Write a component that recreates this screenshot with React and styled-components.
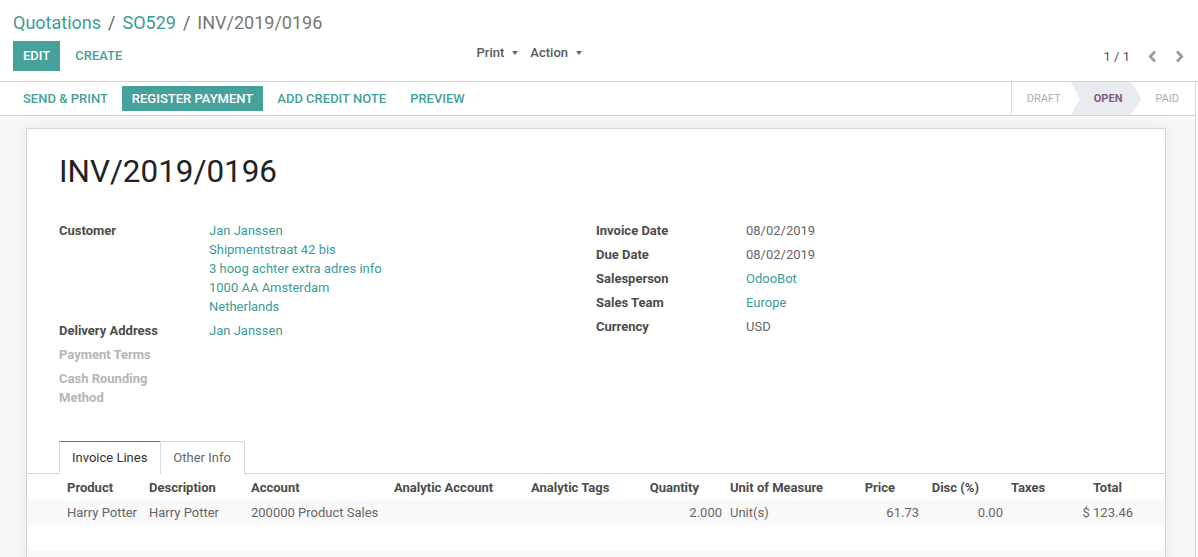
import React from 'react';
import styled, { createGlobalStyle } from 'styled-components';

const TEAL = '#46a19b';
const LINK = '#3a9d97';
const PURPLE = '#875a7b';

const GlobalStyle = createGlobalStyle`
  html, body { margin: 0; padding: 0; height: 100%; overflow: hidden; }
  body { font-family: Roboto, "Noto Sans", sans-serif; font-size: 13px; color: #4c4c4c; background: #fff; }
  * { box-sizing: border-box; }
`;

const Page = styled.div`
  width: 1198px;
  height: 557px;
  display: flex;
  flex-direction: column;
  overflow: hidden;
  background: #fff;
`;

/* ---------- control panel ---------- */
const ControlPanel = styled.div`
  flex: none;
  height: 82px;
  border-bottom: 1px solid #d2d2d2;
  padding: 11px 9px 0 13px;
  display: flex;
  flex-direction: column;
  gap: 6px;
`;

const Breadcrumb = styled.ol`
  list-style: none;
  margin: 0;
  padding: 0;
  display: flex;
  font-size: 18px;
  line-height: 24px;
`;

const Crumb = styled.li`
  color: ${p => (p.$active ? '#777' : LINK)};
  display: flex;
`;

const CrumbSep = styled.span`
  color: #666;
  padding: 0 7px;
`;

const CPRow = styled.div`
  display: grid;
  grid-template-columns: 1fr 1fr;
  height: 30px;
`;

const CPLeft = styled.div`
  display: flex;
  justify-content: space-between;
  align-items: flex-start;
  padding-right: 19px;
`;

const CPRight = styled.div`
  display: flex;
  justify-content: flex-end;
  align-items: flex-start;
`;

const ButtonGroup = styled.div`
  display: flex;
  gap: 5px;
  align-items: center;
`;

const Btn = styled.button`
  font-family: inherit;
  font-size: 13px;
  font-weight: 500;
  text-transform: uppercase;
  border: none;
  border-radius: 0;
  cursor: pointer;
  padding: 0 10px;
  height: ${p => p.$h || 30}px;
  line-height: ${p => p.$h || 30}px;
  background: ${p => (p.$primary ? TEAL : 'transparent')};
  color: ${p => (p.$primary ? '#fff' : TEAL)};
  white-space: nowrap;
`;

const Sidebar = styled.div`
  display: flex;
  gap: 12px;
  margin-top: 2px;
  line-height: 19px;
`;

const Dropdown = styled.span`
  display: flex;
  align-items: center;
  color: #5a5a5a;
  font-size: 13px;
  font-weight: 500;
`;

const Caret = styled.span`
  display: inline-block;
  width: 0;
  height: 0;
  margin-left: 8px;
  border-top: 4px solid #666;
  border-left: 3.5px solid transparent;
  border-right: 3.5px solid transparent;
`;

const Pager = styled.div`
  display: flex;
  align-items: center;
  margin-top: 6px;
  height: 19px;
`;

const PagerValue = styled.span`
  color: #555;
  margin-right: 12px;
  line-height: 19px;
`;

const PagerBtn = styled.span`
  width: 20px;
  height: 19px;
  display: flex;
  align-items: center;
  justify-content: center;
  & + & { margin-left: 7px; }
`;

const Chevron = ({ dir }) => (
  <svg width="9" height="13" viewBox="0 0 9 13">
    <path
      d={dir === 'left' ? 'M7 1.5 L2.2 6.5 L7 11.5' : 'M2 1.5 L6.8 6.5 L2 11.5'}
      fill="none"
      stroke="#9a9a9a"
      strokeWidth="2.6"
    />
  </svg>
);

/* ---------- body ---------- */
const Body = styled.div`
  flex: 1;
  display: flex;
  min-height: 0;
`;

const Main = styled.div`
  flex: 1;
  display: flex;
  flex-direction: column;
  min-width: 0;
`;

const ScrollStrip = styled.div`
  flex: none;
  width: 3px;
  border-left: 1px solid #d8d8d8;
  background: #fff;
`;

const StatusBar = styled.div`
  flex: none;
  height: 34px;
  border-bottom: 1px solid #d2d2d2;
  display: flex;
  justify-content: space-between;
  padding-left: 13px;
`;

const StatusButtons = styled.div`
  display: flex;
  align-items: center;
  gap: 4px;
`;

const Steps = styled.div`
  display: flex;
  border-left: 1px solid #dcdcdc;
  height: 33px;
`;

const Step = styled.div`
  display: flex;
  align-items: center;
  font-size: 11px;
  text-transform: uppercase;
  padding: ${p => p.$pad};
  color: ${p => (p.$current ? PURPLE : '#acacac')};
  font-weight: ${p => (p.$current ? 700 : 400)};
  background: ${p => (p.$current ? '#e9ecef' : 'transparent')};
  clip-path: ${p =>
    p.$current
      ? 'polygon(0 0, calc(100% - 10px) 0, 100% 50%, calc(100% - 10px) 100%, 0 100%, 9px 50%)'
      : 'none'};
`;

const SheetBg = styled.div`
  flex: 1;
  background: #f7f7f7;
  padding: 12px 29px 0 26px;
  overflow: hidden;
`;

const Sheet = styled.div`
  background: #fff;
  border: 1px solid #d3d7dc;
  box-shadow: 0 0 14px rgba(0, 0, 0, 0.06);
  padding: 24px 32px 0 32px;
  min-height: 600px;
`;

const Title = styled.h1`
  margin: 0 0 31px 0;
  font-size: 31.4px;
  line-height: 37px;
  font-weight: 400;
  color: #222;
`;

const Groups = styled.div`
  display: grid;
  grid-template-columns: 1fr 1fr;
`;

const Group = styled.div`
  display: flex;
  flex-direction: column;
`;

const FieldRow = styled.div`
  display: grid;
  grid-template-columns: 150px 1fr;
  padding-bottom: 5px;
  line-height: 19px;
`;

const Label = styled.div`
  font-weight: 700;
  color: ${p => (p.$empty ? '#b5b5b5' : '#4c4c4c')};
  padding-right: 15px;
`;

const Value = styled.div`
  color: ${p => (p.$link ? LINK : '#666')};
`;

const Notebook = styled.div`
  margin: 29px -32px 0 -32px;
`;

const Tabs = styled.ul`
  list-style: none;
  margin: 0;
  padding: 0 0 0 32px;
  display: flex;
  border-bottom: 1px solid #d6d6d6;
`;

const Tab = styled.li`
  padding: 6px 13px 6px 12px;
  line-height: 19px;
  height: 33px;
  border: 1px solid #d9d9d9;
  border-top-color: ${p => (p.$active ? PURPLE : '#d9d9d9')};
  border-bottom: ${p => (p.$active ? '1px solid #fff' : 'none')};
  margin-bottom: -1px;
  background: #fff;
  color: ${p => (p.$active ? '#333' : '#666')};
  & + & { margin-left: -1px; }
`;

const COLS = '82px 102px 143px 137px 113px 86px 114px 83px 84px 53px 77px';

const TRow = styled.div`
  display: grid;
  grid-template-columns: ${COLS};
  padding: 0 28px 0 36px;
  height: ${p => (p.$head ? 26 : 25)}px;
  align-items: center;
  background: ${p => (p.$striped ? '#f9f9f9' : '#fff')};
  box-shadow: ${p => (p.$head ? '0 2px 3px -1px rgba(0,0,0,0.07)' : 'none')};
  position: relative;
`;

const Cell = styled.div`
  padding: 0 ${p => p.$pr || 4}px 0 4px;
  text-align: ${p => (p.$num ? 'right' : 'left')};
  white-space: nowrap;
  overflow: hidden;
  font-weight: ${p => (p.$head ? 700 : 400)};
  color: ${p => (p.$head ? '#4c4c4c' : '#666')};
`;

const columns = [
  { label: 'Product' },
  { label: 'Description' },
  { label: 'Account' },
  { label: 'Analytic Account' },
  { label: 'Analytic Tags' },
  { label: 'Quantity', num: true, hpr: 27 },
  { label: 'Unit of Measure' },
  { label: 'Price', num: true, hpr: 28 },
  { label: 'Disc (%)', num: true, hpr: 28 },
  { label: 'Taxes' },
  { label: 'Total', num: true, hpr: 15 },
];

const lines = [
  ['Harry Potter', 'Harry Potter', '200000 Product Sales', '', '', '2.000', 'Unit(s)', '61.73', '0.00', '', '$\u00a0123.46'],
];

const leftFields = [
  { label: 'Customer', lines: ['Jan Janssen', 'Shipmentstraat 42 bis', '3 hoog achter extra adres info', '1000 AA Amsterdam', 'Netherlands'], link: true },
  { label: 'Delivery Address', lines: ['Jan Janssen'], link: true },
  { label: 'Payment Terms', lines: [], empty: true },
  { label: 'Cash Rounding Method', lines: [], empty: true },
];

const rightFields = [
  { label: 'Invoice Date', lines: ['08/02/2019'] },
  { label: 'Due Date', lines: ['08/02/2019'] },
  { label: 'Salesperson', lines: ['OdooBot'], link: true },
  { label: 'Sales Team', lines: ['Europe'], link: true },
  { label: 'Currency', lines: ['USD'] },
];

const FieldGroup = ({ fields }) => (
  <Group>
    {fields.map(f => (
      <FieldRow key={f.label}>
        <Label $empty={f.empty}>{f.label}</Label>
        <Value $link={f.link}>
          {f.lines.map((l, i) => (
            <div key={i}>{l}</div>
          ))}
        </Value>
      </FieldRow>
    ))}
  </Group>
);

export default function App() {
  return (
    <Page>
      <GlobalStyle />
      <ControlPanel>
        <Breadcrumb>
          <Crumb>Quotations<CrumbSep>/</CrumbSep></Crumb>
          <Crumb>SO529<CrumbSep>/</CrumbSep></Crumb>
          <Crumb $active>INV/2019/0196</Crumb>
        </Breadcrumb>
        <CPRow>
          <CPLeft>
            <ButtonGroup>
              <Btn $primary>Edit</Btn>
              <Btn>Create</Btn>
            </ButtonGroup>
            <Sidebar>
              <Dropdown>Print<Caret /></Dropdown>
              <Dropdown>Action<Caret /></Dropdown>
            </Sidebar>
          </CPLeft>
          <CPRight>
            <Pager>
              <PagerValue>1 / 1</PagerValue>
              <PagerBtn><Chevron dir="left" /></PagerBtn>
              <PagerBtn><Chevron dir="right" /></PagerBtn>
            </Pager>
          </CPRight>
        </CPRow>
      </ControlPanel>
      <Body>
        <Main>
          <StatusBar>
            <StatusButtons>
              <Btn $h={25}>Send &amp; Print</Btn>
              <Btn $h={25} $primary>Register Payment</Btn>
              <Btn $h={25}>Add Credit Note</Btn>
              <Btn $h={25}>Preview</Btn>
            </StatusButtons>
            <Steps>
              <Step $pad="0 10px 0 15px">Draft</Step>
              <Step $current $pad="0 19px 0 23px">Open</Step>
              <Step $pad="0 16px 0 14px">Paid</Step>
            </Steps>
          </StatusBar>
          <SheetBg>
            <Sheet>
              <Title>INV/2019/0196</Title>
              <Groups>
                <FieldGroup fields={leftFields} />
                <FieldGroup fields={rightFields} />
              </Groups>
              <Notebook>
                <Tabs>
                  <Tab $active>Invoice Lines</Tab>
                  <Tab>Other Info</Tab>
                </Tabs>
                <TRow $head>
                  {columns.map(c => (
                    <Cell key={c.label} $head $num={c.num} $pr={c.num ? c.hpr : 4}>
                      {c.label}
                    </Cell>
                  ))}
                </TRow>
                {lines.map((l, i) => (
                  <TRow key={i} $striped>
                    {l.map((v, j) => (
                      <Cell key={j} $num={columns[j].num}>{v}</Cell>
                    ))}
                  </TRow>
                ))}
                <TRow />
                <TRow $striped />
                <TRow />
              </Notebook>
            </Sheet>
          </SheetBg>
        </Main>
        <ScrollStrip />
      </Body>
    </Page>
  );
}
